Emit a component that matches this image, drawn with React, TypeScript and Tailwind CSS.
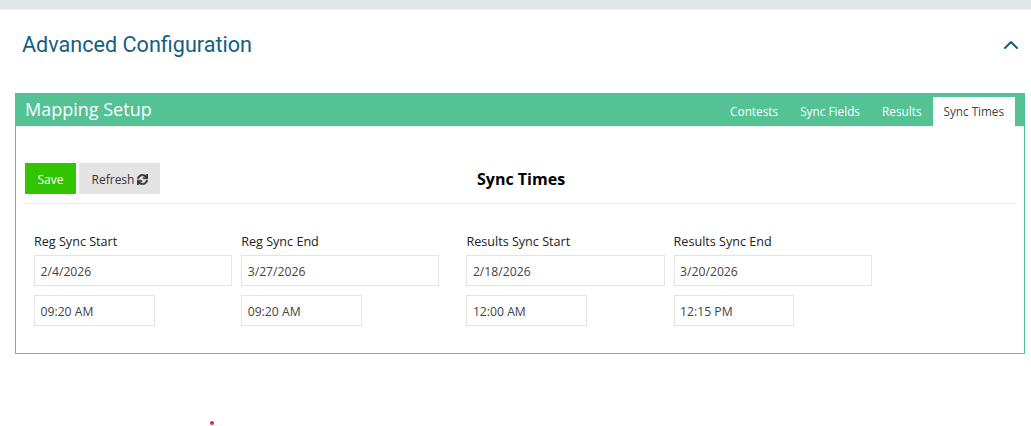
import React from "react";
import { FaSync } from "react-icons/fa";
import { ChevronUp } from "lucide-react";

const tabs = ["Contests", "Sync Fields", "Results"];

const groups = [
  [
    { label: "Reg Sync Start", date: "2/4/2026", time: "09:20 AM" },
    { label: "Reg Sync End", date: "3/27/2026", time: "09:20 AM" },
  ],
  [
    { label: "Results Sync Start", date: "2/18/2026", time: "12:00 AM" },
    { label: "Results Sync End", date: "3/20/2026", time: "12:15 PM" },
  ],
];

const boxClass =
  "border border-[#e4e4e4] h-[31px] pl-[5.5px] pt-[3px] flex items-center text-[12.2px] text-[#444444]";

const App = () => {
  return (
    <div className="relative h-[426px] w-[1031px] overflow-hidden bg-white font-['Open_Sans',sans-serif]">
      <div className="h-[10px] bg-[#e2e7ea] border-b border-[#eceff0]"></div>

      <div className="flex items-center justify-between h-[69px] pl-[22px] pr-[8px]">
        <h1 className="font-['Roboto',sans-serif] text-[21.6px] text-[#14607f] leading-none">
          Advanced Configuration
        </h1>
        <ChevronUp size={24} strokeWidth={2} className="text-[#14607f]" />
      </div>

      <div className="mx-[15px] mt-[14px] w-[1010px] h-[261px] border border-[#54c295]">
        <div className="flex items-end justify-between h-[33px] bg-[#54c295] border-b border-[#eeeeee] pl-[9px] pr-[9px]">
          <h2 className="self-center text-[18px] text-white leading-none pb-[2px]">
            Mapping Setup
          </h2>
          <div className="flex items-end -mb-[1px]">
            {tabs.map((tab) => (
              <span
                key={tab}
                className="flex items-center h-[30px] px-[11px] text-[11.8px] text-white"
              >
                {tab}
              </span>
            ))}
            <span className="flex items-center h-[30px] px-[11px] bg-white text-[11.7px] text-[#444444]">
              Sync Times
            </span>
          </div>
        </div>

        <div className="px-[9px]">
          <div className="relative flex items-center gap-[3px] mt-[36px] pb-[9px] border-b border-[#eeeeee] w-[990px]">
            <button className="w-[51px] h-[31px] pt-[2px] bg-[#33c400] text-white text-[12px]">
              Save
            </button>
            <button className="flex items-center justify-center gap-[3px] w-[81px] h-[31px] pt-[2px] pl-[1px] bg-[#e4e4e4] text-[#333333] text-[12px]">
              Refresh
              <FaSync size={11} className="stroke-current stroke-[24]" />
            </button>
            <h3 className="absolute left-[452px] top-[6px] text-[16px] leading-[20px] font-bold text-black whitespace-nowrap">
              Sync Times
            </h3>
          </div>

          <div className="flex pl-[9px] pt-[29px]">
            {groups.map((group, i) => (
              <div key={i} className="flex w-[432.4px]">
                {group.map((item) => (
                  <div key={item.label} className="w-[207.2px]">
                    <div className="h-[22px] text-[12.6px] leading-[18px] text-[#222222]">
                      {item.label}
                    </div>
                    <div className={`${boxClass} w-[198.2px]`}>{item.date}</div>
                    <div className={`${boxClass} w-[120.6px] mt-[9px]`}>{item.time}</div>
                  </div>
                ))}
              </div>
            ))}
          </div>
        </div>
      </div>

      <span className="absolute left-[210px] top-[421px] size-[4px] rounded-full bg-[#e8243c]"></span>
    </div>
  );
};

export default App;
